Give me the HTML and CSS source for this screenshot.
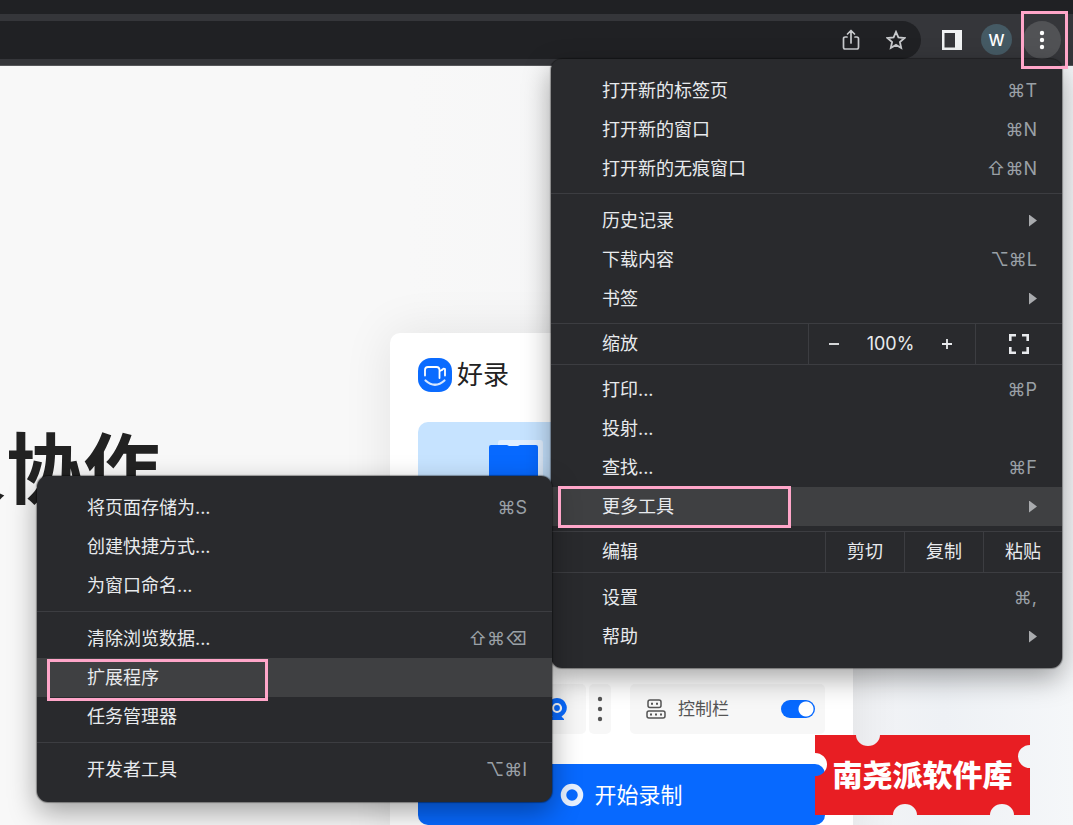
FILE: index.html
```html
<!DOCTYPE html>
<html lang="zh-CN">
<head>
<meta charset="utf-8">
<title>好录</title>
<link rel="stylesheet" href="styles.css">
</head>
<body>
<header class="chrome">
  <div class="tabstrip"></div>
  <div class="toolbar">
    <div class="omnibox">
      <button class="icon-btn" aria-label="分享">
        <svg width="18" height="22" viewBox="0 0 18 22" fill="none" stroke="#c8cacd" stroke-width="1.7" stroke-linecap="round" stroke-linejoin="round"><path d="M5 8H3.2Q1.5 8 1.5 9.700V18.300Q1.500 20 3.200 20H14.800Q16.500 20 16.500 18.300V9.700Q16.500 8 14.800 8H13M9 14V2M5.500 5L9 1.500L12.500 5"/></svg>
      </button>
      <button class="icon-btn" aria-label="收藏">
        <svg width="20" height="20" viewBox="0 0 20 20" fill="none" stroke="#c8cacd" stroke-width="1.8"><path d="M10 1.900L12.400 7.400L18.500 8L13.900 12L15.200 18L10 14.900L4.800 18L6.100 12L1.500 8L7.600 7.400Z"/></svg>
      </button>
    </div>
    <button class="icon-btn panel" aria-label="侧边栏">
      <svg width="20" height="20" viewBox="0 0 20 20"><path fill="#f1f3f4" fill-rule="evenodd" d="M0 0H20V20H0ZM2.500 3V17.500H13V3Z"/></svg>
    </button>
    <button class="avatar">W</button>
    <div class="more-wrap">
      <button class="more" aria-label="更多">
        <svg width="6" height="20" viewBox="0 0 6 20" fill="#fff"><circle cx="3" cy="3" r="2.200"/><circle cx="3" cy="10" r="2.200"/><circle cx="3" cy="17" r="2.200"/></svg>
      </button>
    </div>
  </div>
</header>

<main class="page">
  <h1 class="hero">多人协作</h1>
  <section class="card">
    <div class="brand">
      <svg width="34" height="34" viewBox="0 0 34 34"><rect width="34" height="34" rx="13" fill="#0a6bff"/><path d="M7 17.500V12Q7 9 10 9H18.500Q21.500 9 21.500 12V20M21.500 14C22 12 23 13 24.500 11.500Q25.500 10 27 11V17.500" fill="none" stroke="#fff" stroke-width="1.800" stroke-linecap="round" stroke-linejoin="round"/><path d="M7.500 22.500Q17 31 26.500 22.500" fill="none" stroke="#d6e7ff" stroke-width="2.200" stroke-linecap="round"/></svg>
      <span>好录</span>
    </div>
    <div class="preview">
      <svg width="56" height="60" viewBox="0 0 56 60"><rect x="9" width="45" height="60" rx="3" fill="#e1efff"/><path d="M0 7Q0 5 2 5H18L20 6H29L31 5H47Q49 5 49 7V60H0Z" fill="#0769ff"/></svg>
    </div>
    <div class="tools">
      <button class="tile camera" aria-label="摄像头">
        <svg width="20" height="22" viewBox="0 0 20 22"><path fill="#0a6bff" d="M10 0A9.800 9.800 0 0 1 14.500 18.500L17 21V22H3V21L5.500 18.500A9.800 9.800 0 0 1 10 0Z"/><circle cx="10" cy="10" r="4" fill="none" stroke="#fff" stroke-width="2.200"/></svg>
      </button>
      <button class="tile dots" aria-label="更多选项">
        <svg width="6" height="26" viewBox="0 0 6 26" fill="#555"><circle cx="3" cy="3" r="2.200"/><circle cx="3" cy="13" r="2.200"/><circle cx="3" cy="23" r="2.200"/></svg>
      </button>
      <label class="tile control">
        <svg width="20" height="20" viewBox="0 0 20 20" fill="none" stroke="#555" stroke-width="1.500"><rect x="2" y="1" width="13" height="7.500" rx="2"/><rect x="1" y="12" width="18" height="7" rx="2"/><path d="M5 4.800H7M10 4.800H12M4 15.500H6M9 15.500H11M14 15.500H16" stroke-width="2"/></svg>
        <span>控制栏</span>
        <input class="switch" type="checkbox" checked>
      </label>
    </div>
    <button class="record">
      <svg width="24" height="24" viewBox="0 0 24 24"><circle cx="12" cy="12" r="8.500" fill="none" stroke="#e8f1ff" stroke-width="5.500"/></svg>
      开始录制
    </button>
  </section>
  <div class="stamp">
    <svg class="stamp-shape" viewBox="0 0 215 80" preserveAspectRatio="none"><path fill="#e81e23" d="M0 0H41A12 11 0 0 0 65 0H215V10A12 11.500 0 0 0 215 33V80H199A12 11 0 0 0 175 80H102A12 11 0 0 0 78 80H0V41A12 11.500 0 0 0 0 18Z"/></svg>
    <span>南尧派软件库</span>
  </div>
</main>

<nav class="menu main-menu">
  <ul class="group">
    <li><button class="item">打开新的标签页<kbd>⌘T</kbd></button></li>
    <li><button class="item">打开新的窗口<kbd>⌘N</kbd></button></li>
    <li><button class="item">打开新的无痕窗口<kbd>⇧⌘N</kbd></button></li>
  </ul>
  <ul class="group">
    <li><button class="item">历史记录<i class="arrow"></i></button></li>
    <li><button class="item">下载内容<kbd>⌥⌘L</kbd></button></li>
    <li><button class="item">书签<i class="arrow"></i></button></li>
  </ul>
  <div class="strip">
    <span class="strip-label">缩放</span>
    <div class="zoom">
      <button aria-label="缩小"><svg width="12" height="12" viewBox="0 0 12 12" stroke="#e8eaed" stroke-width="1.800"><path d="M1 6H11"/></svg></button>
      <output>100%</output>
      <button aria-label="放大"><svg width="12" height="12" viewBox="0 0 12 12" stroke="#e8eaed" stroke-width="1.800"><path d="M1 6H11M6 1V11"/></svg></button>
    </div>
    <button class="cell full" aria-label="全屏"><svg width="20" height="20" viewBox="0 0 20 20" fill="none" stroke="#e8eaed" stroke-width="2.600"><path d="M1.300 7V1.300H7M13 1.300H18.700V7M18.700 13V18.700H13M7 18.700H1.300V13"/></svg></button>
  </div>
  <ul class="group">
    <li><button class="item">打印...<kbd>⌘P</kbd></button></li>
    <li><button class="item">投射...</button></li>
    <li><button class="item">查找...<kbd>⌘F</kbd></button></li>
    <li class="parent">
      <button class="item active">更多工具<i class="arrow"></i></button>
      <span class="mark mark-tools"></span>
      <div class="menu submenu">
        <ul class="group">
          <li><button class="item">将页面存储为...<kbd>⌘S</kbd></button></li>
          <li><button class="item">创建快捷方式...</button></li>
          <li><button class="item">为窗口命名...</button></li>
        </ul>
        <ul class="group">
          <li><button class="item">清除浏览数据...<kbd>⇧⌘⌫</kbd></button></li>
          <li class="parent"><button class="item active">扩展程序</button><span class="mark mark-ext"></span></li>
          <li><button class="item">任务管理器</button></li>
        </ul>
        <ul class="group">
          <li><button class="item">开发者工具<kbd>⌥⌘I</kbd></button></li>
        </ul>
      </div>
    </li>
  </ul>
  <div class="strip">
    <span class="strip-label">编辑</span>
    <button class="cell">剪切</button>
    <button class="cell">复制</button>
    <button class="cell">粘贴</button>
  </div>
  <ul class="group">
    <li><button class="item">设置<kbd>⌘,</kbd></button></li>
    <li><button class="item">帮助<i class="arrow"></i></button></li>
  </ul>
</nav>
<span class="mark mark-more"></span>
</body>
</html>
```
FILE: styles.css
```css
* { box-sizing: border-box; }
body {
  margin: 0;
  height: 100vh;
  display: flex;
  flex-direction: column;
  overflow: hidden;
  position: relative;
  font-family: Inter, "Noto Sans CJK SC", sans-serif;
  font-size: 18px;
  line-height: 20px;
  background: #f8f8f8;
}
button {
  font: inherit;
  color: inherit;
  background: none;
  border: 0;
  padding: 0;
  display: flex;
  align-items: center;
  justify-content: center;
}
ul { list-style: none; margin: 0; padding: 0; }
svg { display: block; flex: none; }

/* Browser chrome */
.tabstrip { height: 14px; background: #202124; }
.toolbar {
  height: 52px;
  display: flex;
  align-items: center;
  padding-right: 12px;
  background: #35363a;
  border-bottom: 1px solid #56575a;
}
.omnibox {
  flex: 1;
  height: 38px;
  display: flex;
  align-items: center;
  justify-content: flex-end;
  gap: 26px;
  padding-right: 15px;
  background: #202124;
  border-radius: 0 19px 19px 0;
}
.panel { margin: 0 19px 0 21px; }
.avatar {
  width: 31px;
  height: 31px;
  border-radius: 50%;
  background: #455a64;
  color: #fff;
  font-size: 16px;
  font-weight: 500;
}
.more-wrap { margin-left: 11px; }
.more { width: 38px; height: 38px; border-radius: 50%; background: #515255; }

/* Highlight frames */
.mark {
  position: absolute;
  z-index: 3;
  border: 3px solid #ffa6c9;
  pointer-events: none;
}
.mark-more { top: 11px; right: 5px; width: 47px; height: 58px; }
.mark-tools { left: 7px; top: -1px; width: 233px; height: 42px; }
.mark-ext { left: 10px; top: 1px; width: 221px; height: 42px; }

/* Page */
.page {
  flex: 1;
  min-height: 0;
  display: flex;
  align-items: flex-start;
  position: relative;
  overflow: hidden;
  padding-right: 220px;
  background: linear-gradient(90deg, #f8f8f8 0 38%, #f3f4f6 78%, #eef1f5 88%, #f5f7f9 100%);
}
.hero {
  flex: 1;
  min-width: 0;
  margin: 0;
  padding: 364px 230px 0 0;
  display: flex;
  justify-content: flex-end;
  white-space: nowrap;
  color: #222;
  font-size: 77px;
  line-height: 80px;
  font-weight: 700;
}
.card {
  width: 463px;
  margin-top: 267px;
  padding: 25px 28px;
  display: flex;
  flex-direction: column;
  gap: 30px;
  background: #fff;
  border-radius: 10px;
  box-shadow: 0 0 50px rgba(0, 0, 0, .09);
}
.brand {
  height: 34px;
  display: flex;
  align-items: center;
  gap: 5px;
  font-size: 26px;
  color: #222;
}
.preview {
  height: 232px;
  padding: 18px 0 0 71px;
  border-radius: 10px;
  background: #c6e3ff;
}
.tools { display: flex; height: 50px; }
.tile {
  display: flex;
  align-items: center;
  background: #f7f7f7;
  border-radius: 5px;
}
.camera { width: 168px; justify-content: flex-end; padding-right: 19px; }
.dots { width: 22px; margin: 0 19px 0 3px; }
.control {
  flex: 1;
  gap: 12px;
  padding: 0 10px 0 16px;
  color: #555;
  font-size: 17px;
}
.switch {
  appearance: none;
  width: 34px;
  height: 18px;
  margin: 0 0 0 auto;
  border-radius: 9px;
  background: radial-gradient(circle at 25px 9px, #fff 0 7px, #0769ff 8px);
}
.record {
  height: 61px;
  gap: 10px;
  border-radius: 10px;
  background: #0769ff;
  color: #fff;
  font-size: 22px;
}
.stamp {
  position: absolute;
  right: 43px;
  bottom: 10px;
  width: 215px;
  height: 80px;
  display: flex;
  align-items: center;
  justify-content: center;
  color: #fff;
  font-size: 30px;
  font-weight: 900;
}
.stamp-shape { position: absolute; inset: 0; width: 100%; height: 100%; }
.stamp span { position: relative; }

/* Menus */
.menu {
  position: absolute;
  padding: 5px 0 7px;
  border-radius: 11px;
  background: #292a2d;
  color: #e8eaed;
  box-shadow: 0 0 1px 1px rgba(0, 0, 0, .35), 0 10px 28px rgba(0, 0, 0, .36);
}
.main-menu { top: 59px; right: 11px; width: 511px; }
.submenu { right: calc(100% - 1px); top: -11px; width: 515px; z-index: 2; }
.group { padding: 7px 0 5px; }
.submenu .group { padding-bottom: 6px; }
.group + .group, .strip, .strip + .group { border-top: 1px solid #3c3d41; }
.strip + .group { padding-top: 5px; }
.item {
  width: 100%;
  height: 39px;
  padding: 0 25px 0 51px;
  justify-content: space-between;
  white-space: nowrap;
}
.submenu .item { padding-left: 50px; }
.active { background: #3f4042; }
.parent { position: relative; }
kbd { font: inherit; color: #9aa0a6; }
.arrow {
  width: 8px;
  height: 12px;
  background: #a9abae;
  clip-path: polygon(0 0, 100% 50%, 0 100%);
}
.strip { display: flex; height: 41px; }
.strip-label { flex: 1; padding-left: 51px; align-self: center; }
.cell { width: 79px; border-left: 1px solid #3c3d41; }
.full { width: 87px; }
.zoom {
  width: 167px;
  display: flex;
  align-items: center;
  justify-content: space-between;
  padding: 0 22px 0 19px;
  border-left: 1px solid #3c3d41;
}
```
